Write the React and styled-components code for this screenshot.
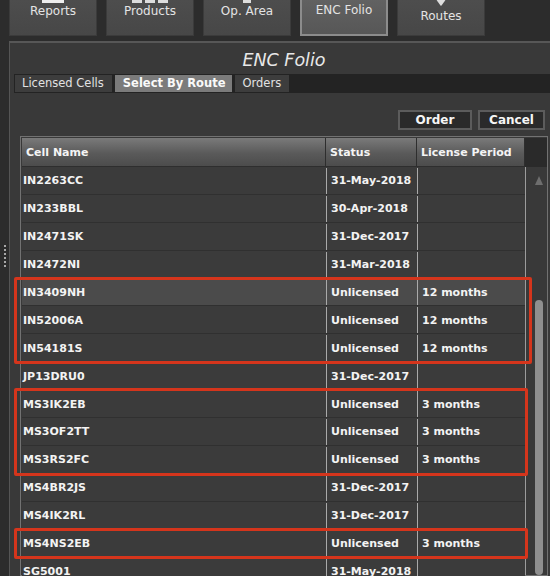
import styled, { createGlobalStyle } from "styled-components";

const GlobalStyle = createGlobalStyle`
  html, body {
    margin: 0;
    padding: 0;
    background: #2c2c2c;
    overflow: hidden;
  }
  body {
    font-family: "DejaVu Sans", Verdana, sans-serif;
    width: 550px;
    height: 576px;
  }
  * { box-sizing: border-box; }
`;

const cells = [
  { name: "IN2263CC", status: "31-May-2018" },
  { name: "IN233BBL", status: "30-Apr-2018" },
  { name: "IN2471SK", status: "31-Dec-2017" },
  { name: "IN2472NI", status: "31-Mar-2018" },
  { name: "IN3409NH", status: "Unlicensed", period: "12 months", group: 1, selected: true },
  { name: "IN52006A", status: "Unlicensed", period: "12 months", group: 1 },
  { name: "IN54181S", status: "Unlicensed", period: "12 months", group: 1 },
  { name: "JP13DRU0", status: "31-Dec-2017" },
  { name: "MS3IK2EB", status: "Unlicensed", period: "3 months", group: 2 },
  { name: "MS3OF2TT", status: "Unlicensed", period: "3 months", group: 2 },
  { name: "MS3RS2FC", status: "Unlicensed", period: "3 months", group: 2 },
  { name: "MS4BR2JS", status: "31-Dec-2017" },
  { name: "MS4IK2RL", status: "31-Dec-2017" },
  { name: "MS4NS2EB", status: "Unlicensed", period: "3 months", group: 3 },
  { name: "SG5001", status: "31-May-2018" },
];

// consecutive rows with the same group number get one red box
const groupRows = (rows) => {
  const out = [];
  rows.forEach((row) => {
    const last = out[out.length - 1];
    if (row.group && last && last.group === row.group) {
      last.rows.push(row);
    } else {
      out.push({ group: row.group, rows: [row] });
    }
  });
  return out;
};

const ReportIcon = () => (
  <svg width="24" height="24" viewBox="0 0 24 24">
    <rect x="5" y="2" width="14" height="16" fill="none" stroke="#eee" strokeWidth="2" />
    <rect x="1" y="20" width="22" height="4" fill="#eee" />
  </svg>
);

const ProductsIcon = () => (
  <svg width="40" height="24" viewBox="0 0 40 24">
    <rect x="2" y="4" width="10" height="8" fill="#ddd" />
    <rect x="15" y="4" width="10" height="8" fill="#ddd" />
    <rect x="28" y="4" width="10" height="8" fill="#ddd" />
    <rect x="2" y="20" width="10" height="4" fill="#ddd" />
    <rect x="15" y="20" width="10" height="4" fill="#ddd" />
    <rect x="28" y="20" width="10" height="4" fill="#ddd" />
  </svg>
);

const AreaIcon = () => (
  <svg width="24" height="24" viewBox="0 0 24 24">
    <path d="M4 4 L20 4 L20 18 L4 18 Z" fill="none" stroke="#ddd" strokeWidth="2" />
    <rect x="8" y="19" width="8" height="5" fill="#ddd" />
  </svg>
);

const RoutesIcon = () => (
  <svg width="24" height="24" viewBox="0 0 24 24">
    <path d="M12 2 C7 2 5 6 5 9 C5 14 12 22 12 22 C12 22 19 14 19 9 C19 6 17 2 12 2 Z" fill="#ddd" />
  </svg>
);

const navItems = [
  { label: "Reports", icon: <ReportIcon /> },
  { label: "Products", icon: <ProductsIcon /> },
  { label: "Op. Area", icon: <AreaIcon /> },
  { label: "ENC Folio", active: true },
  { label: "Routes", icon: <RoutesIcon />, low: true },
];

export default function App() {
  return (
    <Screen>
      <GlobalStyle />
      <NavBar>
        {navItems.map((item) => (
          <NavButton key={item.label} $active={item.active} $low={item.low}>
            <NavIcon>{item.icon}</NavIcon>
            <NavLabel>{item.label}</NavLabel>
          </NavButton>
        ))}
      </NavBar>

      <Workspace>
        <Grip>
          {[0, 1, 2, 3, 4, 5].map((i) => (
            <GripDot key={i} />
          ))}
        </Grip>

        <Panel>
          <PanelTitle>ENC Folio</PanelTitle>

          <SubTabs>
            <SubTab>Licensed Cells</SubTab>
            <SubTab $active>Select By Route</SubTab>
            <SubTab>Orders</SubTab>
          </SubTabs>

          <Toolbar>
            <ActionButton $w={74}>Order</ActionButton>
            <ActionButton $w={67}>Cancel</ActionButton>
          </Toolbar>

          <TableFrame>
            <HeaderRow>
              <HeaderCell>Cell Name</HeaderCell>
              <HeaderCell>Status</HeaderCell>
              <HeaderCell>License Period</HeaderCell>
              <HeaderCorner />
            </HeaderRow>

            <TableBody>
              <Rows>
                {groupRows(cells).map((g, gi) => (
                  <RowGroup key={gi} $flagged={!!g.group} $wide={g.group === 1}>
                    {g.rows.map((row) => (
                      <Row key={row.name} $selected={row.selected}>
                        <Cell>{row.name}</Cell>
                        <Cell $divided>{row.status}</Cell>
                        <Cell $divided>{row.period || ""}</Cell>
                      </Row>
                    ))}
                  </RowGroup>
                ))}
              </Rows>

              <ScrollTrack>
                <ScrollArrow />
                <ScrollThumb />
              </ScrollTrack>
            </TableBody>
          </TableFrame>
        </Panel>
      </Workspace>
    </Screen>
  );
}

const Screen = styled.div`
  width: 550px;
  height: 576px;
  display: flex;
  flex-direction: column;
  overflow: hidden;
  background: #2c2c2c;
`;

const NavBar = styled.div`
  display: flex;
  gap: 9px;
  padding-left: 9px;
  margin-top: -30px;
  height: 66px;
  flex-shrink: 0;
`;

const NavButton = styled.div`
  width: 88px;
  height: 66px;
  display: flex;
  flex-direction: column;
  align-items: center;
  justify-content: flex-end;
  padding-bottom: ${(p) => (p.$low ? 12 : 17)}px;
  background: ${(p) =>
    p.$active
      ? "linear-gradient(#6a6a6a, #575757)"
      : "linear-gradient(#525252, #474747)"};
  border: ${(p) => (p.$active ? "2px solid #8c8c8c" : "1px solid #3b3b3b")};
  color: #e4e4e4;
`;

const NavIcon = styled.div`
  height: 24px;
  margin-bottom: 1px;
  display: flex;
  align-items: flex-end;
`;

const NavLabel = styled.span`
  font-size: 12px;
  line-height: 14px;
  white-space: nowrap;
`;

const Workspace = styled.div`
  flex: 1;
  display: flex;
  margin-top: 5px;
  min-height: 0;
`;

const Grip = styled.div`
  width: 9px;
  flex-shrink: 0;
  display: flex;
  flex-direction: column;
  align-items: center;
  gap: 2px;
  padding-top: 204px;
`;

const GripDot = styled.span`
  width: 2px;
  height: 2px;
  background: #a8a8a8;
`;

const Panel = styled.div`
  flex: 1;
  min-width: 0;
  display: flex;
  flex-direction: column;
  background: #393939;
  border-top: 2px solid #575757;
  border-left: 1px solid #555;
  padding-left: 4px;
`;

const PanelTitle = styled.div`
  height: 31px;
  padding-top: 3px;
  line-height: 28px;
  text-align: center;
  font-style: italic;
  font-size: 17.5px;
  color: #e8e8e8;
  padding-left: 4px;
`;

const SubTabs = styled.div`
  height: 19px;
  display: flex;
  gap: 3px;
  padding: 1px 0 1px 1px;
  background: #232323;
`;

const SubTab = styled.div`
  height: 17px;
  line-height: 17px;
  padding: 0 ${(p) => (p.$active ? "7px 0 8px" : "8px 0 7px")};
  font-size: 11.5px;
  font-weight: ${(p) => (p.$active ? 700 : 400)};
  color: ${(p) => (p.$active ? "#fafafa" : "#e2e2e2")};
  background: ${(p) => (p.$active ? "#7b7b7b" : "#3d3d3d")};
  white-space: nowrap;
`;

const Toolbar = styled.div`
  display: flex;
  justify-content: flex-end;
  gap: 6px;
  margin-top: 17px;
  padding-right: 5px;
`;

const ActionButton = styled.div`
  width: ${(p) => p.$w}px;
  height: 20px;
  display: flex;
  align-items: center;
  justify-content: center;
  background: #2a2a2a;
  border: 2px solid #5c5c5c;
  color: #f6f6f6;
  font-size: 12px;
  font-weight: 700;
`;

const TableFrame = styled.div`
  margin: 6px 2px 0 6px;
  border: 1px solid #727272;
  padding: 1px 0 0 1px;
  display: flex;
  flex-direction: column;
  min-height: 0;
`;

const cols = "304px 91px 108px";

const HeaderRow = styled.div`
  display: grid;
  grid-template-columns: ${cols} 1fr;
  height: 29px;
`;

const HeaderCell = styled.div`
  display: flex;
  align-items: center;
  padding-left: 4px;
  background: linear-gradient(#7a7a7a, #5a5a5a 55%, #4c4c4c);
  border-right: 1px solid #2e2e2e;
  border-bottom: 1px solid #2e2e2e;
  color: #f4f4f4;
  font-size: 11px;
  font-weight: 700;
`;

const HeaderCorner = styled.div`
  background: #2a2a2a;
`;

const TableBody = styled.div`
  display: flex;
  flex: 1;
  min-height: 0;
`;

const Rows = styled.div`
  width: 503px;
  flex-shrink: 0;
`;

const RowGroup = styled.div`
  position: relative;

  ${(p) =>
    p.$flagged &&
    `
    &::after {
      content: "";
      position: absolute;
      top: -2px;
      bottom: -2px;
      left: -8px;
      right: ${p.$wide ? -7 : -3}px;
      border: 3px solid #d5351c;
      border-radius: 2px;
      pointer-events: none;
      z-index: 2;
    }
  `}
`;

const Row = styled.div`
  display: grid;
  grid-template-columns: ${cols};
  height: 27.9px;
  padding-top: 1px;
  background: ${(p) => (p.$selected ? "#4b4b4b" : "#3b3b3b")};
  border-bottom: 1px solid #303030;
`;

const Cell = styled.div`
  display: flex;
  align-items: center;
  padding-left: ${(p) => (p.$divided ? 4 : 1)}px;
  border-left: ${(p) => (p.$divided ? "1px solid #a9a9a9" : "none")};
  color: #f3f3f3;
  font-size: 11px;
  font-weight: 700;
  white-space: nowrap;
`;

const ScrollTrack = styled.div`
  flex: 1;
  display: flex;
  flex-direction: column;
  align-items: center;
  background: #393939;
  border-left: 1px solid #9c9c9c;
  padding-left: 4px;
`;

const ScrollArrow = styled.div`
  margin-top: 9px;
  width: 0;
  height: 0;
  border-left: 4px solid transparent;
  border-right: 4px solid transparent;
  border-bottom: 9px solid #6e6e6e;
`;

const ScrollThumb = styled.div`
  margin-top: 115px;
  width: 8px;
  flex: 1;
  border-radius: 4px;
  background: #8f8f8f;
`;
